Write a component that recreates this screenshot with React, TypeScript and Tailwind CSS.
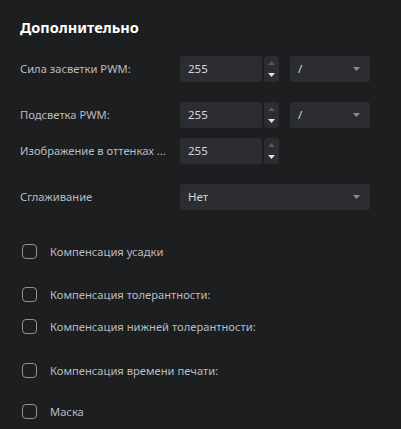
import React from 'react';

const Spinner = () => (
  <div className="ml-[2px] flex h-[26px] w-[15px] flex-col items-center justify-between rounded-[3px] bg-[#2c2d30] py-[5px]">
    <svg width="7" height="4" viewBox="0 0 7 4"><path d="M0 4 L3.5 0 L7 4 Z" fill="#55575b" /></svg>
    <svg width="7" height="4" viewBox="0 0 7 4"><path d="M0 0 L7 0 L3.5 4 Z" fill="#e2e2e2" /></svg>
  </div>
);

const NumInput = ({ value }: { value: string }) => (
  <div className="flex items-center">
    <div className="flex h-[26px] w-[82px] items-center rounded-[3px] bg-[#2c2d30] pl-[8px] text-[11.5px] text-[#d6d8db]">
      {value}
    </div>
    <Spinner />
  </div>
);

const Select = ({ value, width }: { value: string; width: string }) => (
  <div className={`flex h-[26px] ${width} items-center justify-between rounded-[3px] bg-[#2c2d30] pl-[8px] pr-[10px] text-[11.5px] text-[#d6d8db]`}>
    <span>{value}</span>
    <svg width="7" height="4" viewBox="0 0 7 4"><path d="M0 0 L7 0 L3.5 4 Z" fill="#8b8d91" /></svg>
  </div>
);

const Check = ({ label, className }: { label: string; className: string }) => (
  <div className={`flex h-[15px] items-center ${className}`}>
    <div className="ml-[2px] h-[15px] w-[15px] rounded-[4px] border border-[#8f9195]" />
    <span className="ml-[13px] whitespace-nowrap text-[11.2px] leading-[15px] text-[#b9bcc0]">{label}</span>
  </div>
);

export default function App() {
  return (
    <div
      className="h-[429px] w-[401px] overflow-hidden bg-[#1d1e20] px-[20px] pt-[17px]"
      style={{ fontFamily: '"Noto Sans", "Open Sans", sans-serif' }}
    >
      <h2 className="text-[14.5px] font-bold leading-[20px] text-white">Дополнительно</h2>

      <div className="mt-[19px] flex items-center">
        <div className="w-[160px] whitespace-nowrap text-[11.2px] text-[#b9bcc0]">Сила засветки PWM:</div>
        <NumInput value="255" />
        <div className="ml-[11px]"><Select value="/" width="w-[80px]" /></div>
      </div>

      <div className="mt-[20px] flex items-center">
        <div className="w-[160px] whitespace-nowrap text-[11.2px] text-[#b9bcc0]">Подсветка PWM:</div>
        <NumInput value="255" />
        <div className="ml-[11px]"><Select value="/" width="w-[80px]" /></div>
      </div>

      <div className="mt-[10px] flex items-center">
        <div className="w-[160px] whitespace-nowrap text-[11.2px] text-[#b9bcc0]">Изображение в оттенках ...</div>
        <NumInput value="255" />
      </div>

      <div className="mt-[20px] flex items-center">
        <div className="w-[160px] whitespace-nowrap text-[11.2px] text-[#b9bcc0]">Сглаживание</div>
        <Select value="Нет" width="w-[190px]" />
      </div>

      <div className="flex flex-col">
        <Check label="Компенсация усадки" className="mt-[34px]" />
        <Check label="Компенсация толерантности:" className="mt-[28px]" />
        <Check label="Компенсация нижней толерантности:" className="mt-[17px]" />
        <Check label="Компенсация времени печати:" className="mt-[29px]" />
        <Check label="Маска" className="mt-[26px]" />
      </div>
    </div>
  );
}
